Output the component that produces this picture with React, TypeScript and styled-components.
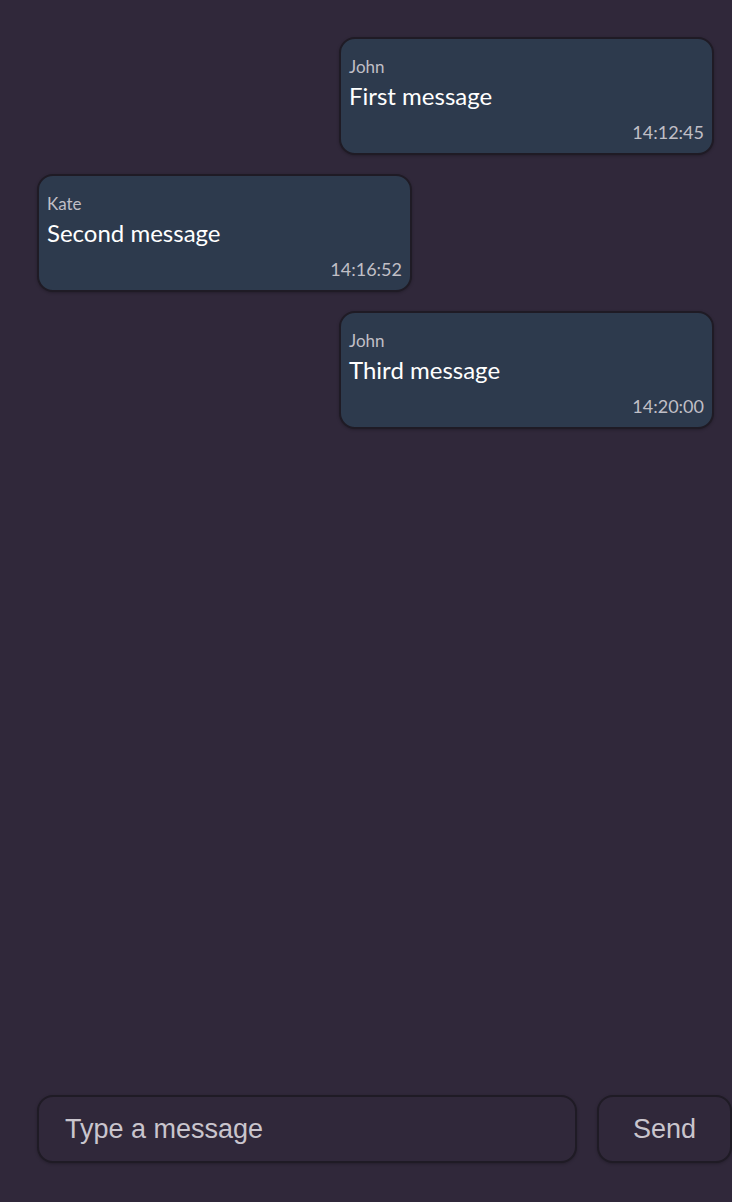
import React from "react";
import styled, { createGlobalStyle } from "styled-components";

const Global = createGlobalStyle`
  html, body { margin: 0; padding: 0; background: #30283a; }
  body { font-family: "Lato", "Noto Sans", sans-serif; }
  * { box-sizing: border-box; }
`;

const Page = styled.div`
  height: 1202px;
  display: flex;
  flex-direction: column;
  overflow: hidden;
`;

const List = styled.div`
  flex: 1;
  display: flex;
  flex-direction: column;
  gap: 19px;
  padding: 37px 18px 0 37px;
`;

const Bubble = styled.div<{ $mine: boolean }>`
  align-self: ${(p) => (p.$mine ? "flex-end" : "flex-start")};
  width: 375px;
  background: #2d3a4d;
  border: 2px solid #1f1b25;
  border-radius: 16px;
  padding: 18px 8px 12px 8px;
  display: flex;
  flex-direction: column;
  box-shadow: 0 1px 3px rgba(0, 0, 0, 0.25);
`;

const Name = styled.div`
  font-size: 17px;
  line-height: 20px;
  color: #c0bfc6;
`;

const Text = styled.div`
  margin-top: 7px;
  font-size: 24px;
  line-height: 24px;
  color: #ffffff;
`;

const Time = styled.div`
  margin-top: 15px;
  align-self: flex-end;
  font-size: 18px;
  line-height: 18px;
  color: #c0bfc6;
`;

const InputRow = styled.div`
  display: flex;
  gap: 20px;
  padding: 0 0 39px 37px;
`;

const Input = styled.input`
  width: 540px;
  height: 68px;
  background: #30283a;
  border: 2px solid #1f1b25;
  border-radius: 16px;
  padding: 0 26px;
  font-family: "Liberation Sans", Arial, sans-serif;
  font-size: 27px;
  color: #d4d0d8;
  outline: none;
  box-shadow: 0 1px 3px rgba(0, 0, 0, 0.25);
  &::placeholder { color: #c9c5cd; }
`;

const SendButton = styled.button`
  width: 135px;
  height: 68px;
  background: #30283a;
  border: 2px solid #1f1b25;
  border-radius: 16px;
  font-family: "Liberation Sans", Arial, sans-serif;
  font-size: 27px;
  color: #c9c5cd;
  flex-shrink: 0;
  box-shadow: 0 1px 3px rgba(0, 0, 0, 0.25);
`;

const messages = [
  { name: "John", text: "First message", time: "14:12:45", mine: true },
  { name: "Kate", text: "Second message", time: "14:16:52", mine: false },
  { name: "John", text: "Third message", time: "14:20:00", mine: true },
];

export default function App() {
  return (
    <Page>
      <Global />
      <List>
        {messages.map((m, i) => (
          <Bubble key={i} $mine={m.mine}>
            <Name>{m.name}</Name>
            <Text>{m.text}</Text>
            <Time>{m.time}</Time>
          </Bubble>
        ))}
      </List>
      <InputRow>
        <Input placeholder="Type a message" />
        <SendButton>Send</SendButton>
      </InputRow>
    </Page>
  );
}
